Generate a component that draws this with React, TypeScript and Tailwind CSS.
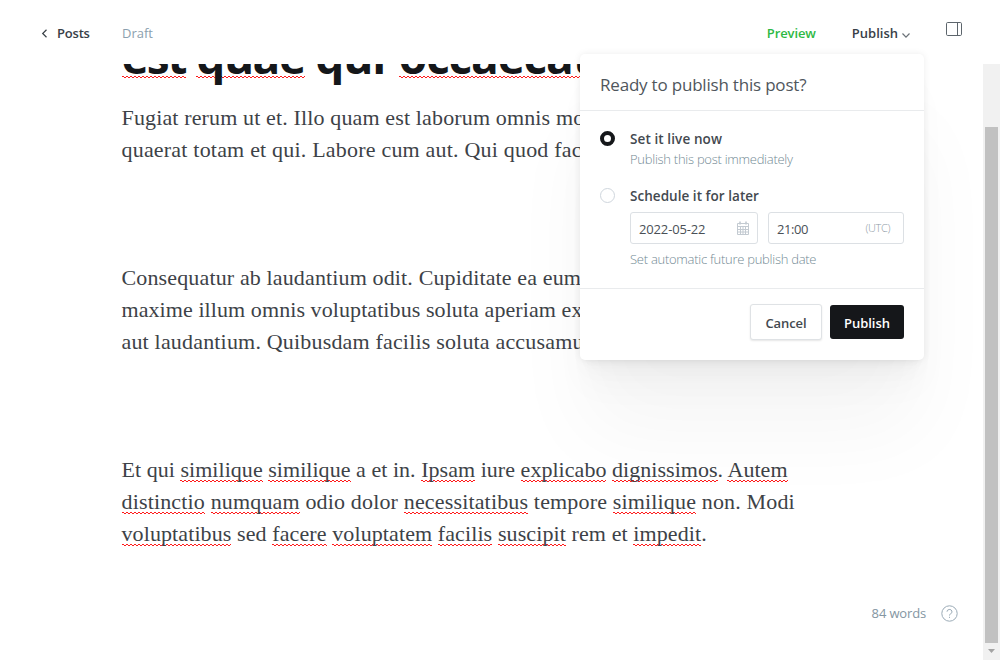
import type { ReactNode } from 'react';

const WAVE =
  'bg-[linear-gradient(90deg,#ff1a1a_60%,transparent_60%),linear-gradient(90deg,#ff1a1a_10%,transparent_10%,transparent_50%,#ff1a1a_50%)] bg-[length:4px_1px] bg-repeat-x';

function Sp({ children }: { children: ReactNode }) {
  return <span className={`${WAVE} bg-[position:0_calc(100%-1px),0_100%]`}>{children}</span>;
}

function TitleSp({ className = '', children }: { className?: string; children: ReactNode }) {
  return <span className={`${WAVE} bg-[position:0_calc(100%-10px),0_calc(100%-9px)] ${className}`}>{children}</span>;
}

function Line({ className, children }: { className: string; children: ReactNode }) {
  return <span className={`block whitespace-nowrap ${className}`}>{children}</span>;
}

function TopBar() {
  return (
    <header className="flex h-16 shrink-0 items-center pl-[41px] pr-[38px] pt-[3px] text-[13px] font-semibold text-[#394047]">
      <svg className="-mt-px mr-[9px]" width="7" height="9" viewBox="0 0 7 9" fill="none" stroke="#394047" strokeWidth="1.2">
        <path d="M5.5 .8 1.7 4.5l3.8 3.7" />
      </svg>
      <span className="w-[65px] tracking-[-0.2px]">Posts</span>
      <span className="font-normal text-[#8b9fae]">Draft</span>
      <span className="ml-auto tracking-[-0.1px] text-[#2eb944]">Preview</span>
      <span className="ml-[36px]">Publish</span>
      <svg className="ml-[4px] mt-[4px]" width="8" height="5" viewBox="0 0 8 5" fill="none" stroke="#6b7278" strokeWidth="1.2">
        <path d="M.5.5 4 4.1 7.5.5" />
      </svg>
      <svg className="-mt-[9px] ml-[36px]" width="16" height="14" viewBox="0 0 16 14" fill="none" stroke="#5d656c">
        <rect x=".5" y=".5" width="15" height="13" rx="1.2" />
        <path d="M11.5.5v13" />
      </svg>
    </header>
  );
}

function Editor() {
  return (
    <div className="min-w-0 flex-1 overflow-hidden pl-[121.5px] text-[#3d4247]">
      <h1 className="-mt-6 mb-[30px] h-8 whitespace-nowrap text-[46px] leading-8 font-bold tracking-[-1.2px] text-[#15171a]">
        <TitleSp className="tracking-[-2px]">est</TitleSp> <TitleSp className="tracking-[-1.5px]">quae</TitleSp>{' '}
        <span className="mr-[3px]">qui</span> <TitleSp>occaecati</TitleSp>
      </h1>
      <div className="flex flex-col gap-24 font-['Liberation_Serif',serif] text-[22px] leading-8">
        <p>
          <Line className="tracking-[0.14px]">Fugiat rerum ut et. Illo quam est laborum omnis molestias</Line>
          <Line className="tracking-[0.2px]">quaerat totam et qui. Labore cum aut. Qui quod facere</Line>
        </p>
        <p>
          <Line className="tracking-[0.14px]">Consequatur ab laudantium odit. Cupiditate ea eum et</Line>
          <Line className="tracking-[0.08px]">maxime illum omnis voluptatibus soluta aperiam explicabo</Line>
          <Line className="tracking-[0.18px]">aut laudantium. Quibusdam facilis soluta accusamus</Line>
        </p>
        <p>
          <Line className="tracking-[0.04px]">
            Et qui <Sp>similique</Sp> <Sp>similique</Sp> a et in. <Sp>Ipsam</Sp> iure <Sp>explicabo</Sp> <Sp>dignissimos</Sp>. <Sp>Autem</Sp>
          </Line>
          <Line className="tracking-[0.16px]">
            <Sp>distinctio</Sp> <Sp>numquam</Sp> odio dolor <Sp>necessitatibus</Sp> tempore <Sp>similique</Sp> non. Modi
          </Line>
          <Line className="tracking-[0.1px]">
            <Sp>voluptatibus</Sp> sed <Sp>facere</Sp> <Sp>voluptatem</Sp> <Sp>facilis</Sp> <Sp>suscipit</Sp> rem et <Sp>impedit</Sp>.
          </Line>
        </p>
      </div>
    </div>
  );
}

function Scrollbar() {
  return (
    <div className="flex w-[17px] shrink-0 flex-col items-center bg-[#f1f1f1] pt-[63px]">
      <div className="h-[516px] w-[13px] bg-[#c1c1c1]" />
      <svg className="mt-[6px]" width="7" height="4" viewBox="0 0 7 4">
        <path d="M0 0h7L3.5 4z" fill="#a3a3a3" />
      </svg>
    </div>
  );
}

function CalendarIcon() {
  return (
    <svg width="12" height="14" viewBox="0 0 12 14" fill="none" stroke="#c3cad1">
      <path d="M.5 2.5h11v11H.5zM.5 5.5h11M.5 8.5h11M.5 11h11M3.5 5v8M6 5v8M8.5 5v8" />
      <path d="M3 .5v3M9 .5v3" strokeWidth="1.6" />
    </svg>
  );
}

function PublishMenu() {
  return (
    <div className="absolute left-[580px] top-[54px] flex h-[306px] w-[344px] flex-col rounded-[5px] bg-white text-[13px] text-[#43494f] shadow-[0_0_7px_rgba(0,0,0,0.08),0_2.1px_2.2px_-5px_rgba(0,0,0,0.011),0_5.1px_5.3px_-5px_rgba(0,0,0,0.016),0_9.5px_10px_-5px_rgba(0,0,0,0.02),0_17px_17.9px_-5px_rgba(0,0,0,0.024),0_31.8px_33.4px_-5px_rgba(0,0,0,0.029),0_76px_80px_-5px_rgba(0,0,0,0.04)]">
      <div className="flex h-[57px] items-center border-b border-[#e9ebed] px-5 pt-[5px] text-[17px] tracking-[-0.2px] text-[#50565c]">
        Ready to publish this post?
      </div>
      <div className="flex h-[178px] flex-col border-b border-[#e9ebed] px-5 pt-[20px]">
        <div className="flex h-[57px] gap-[15px]">
          <div className="size-[15px] rounded-full border-4 border-[#15171a] bg-white" />
          <div className="leading-5">
            <div className="-mt-[2px] text-[13.5px] font-semibold tracking-[0.1px]">Set it live now</div>
            <div className="font-light tracking-[-0.27px] text-[#738a94]">Publish this post immediately</div>
          </div>
        </div>
        <div className="flex gap-[15px]">
          <div className="size-[15px] rounded-full border border-[#cfd6dd] bg-white" />
          <div className="flex-1 leading-5">
            <div className="-mt-[2px] text-[13.5px] font-semibold tracking-[0.04px]">Schedule it for later</div>
            <div className="mt-[6px] mb-[5px] flex gap-[10px] text-[#4a5056]">
              <div className="flex h-8 w-32 items-center justify-between rounded-[3px] border border-[#dce0e4] pl-2 pr-2">
                <span className="mt-px tracking-[-0.15px]">2022-05-22</span>
                <CalendarIcon />
              </div>
              <div className="flex h-8 w-[136px] items-center justify-between rounded-[3px] border border-[#dce0e4] pl-2 pr-[13px]">
                <span className="mt-px tracking-[-0.4px]">21:00</span>
                <span className="text-[11px] font-light tracking-[-0.4px] text-[#8e9aa5]">(UTC)</span>
              </div>
            </div>
            <div className="font-light tracking-[-0.27px] text-[#738a94]">Set automatic future publish date</div>
          </div>
        </div>
      </div>
      <div className="flex items-center justify-end gap-2 px-5 pt-[15px] font-semibold">
        <button className="h-9 w-[72px] rounded-[3px] border border-[#dfe2e5] bg-white pt-[3px] tracking-[-0.1px] shadow-[0_1px_2px_rgba(0,0,0,0.1)]">Cancel</button>
        <button className="h-[34px] w-[74px] rounded-[3px] bg-[#15171a] pt-[3px] text-white">Publish</button>
      </div>
    </div>
  );
}

function WordCount() {
  return (
    <div className="absolute bottom-[37px] right-[42px] flex items-center gap-[15px] text-[13px] text-[#8496a2]">
      <span className="tracking-[-0.15px]">84 words</span>
      <svg width="17" height="17" viewBox="0 0 17 17" fill="none" stroke="#9aaab6">
        <circle cx="8.5" cy="8.5" r="7.7" />
        <path d="M6 6.7a2.5 2.3 0 1 1 3.6 2.1c-.8.4-1.1.8-1.1 1.7M8.5 11.8v1.1" />
      </svg>
    </div>
  );
}

export default function App() {
  return (
    <div className="relative flex h-[660px] w-[1000px] flex-col overflow-hidden bg-white font-['Open_Sans',sans-serif]">
      <TopBar />
      <div className="flex min-h-0 flex-1">
        <Editor />
        <Scrollbar />
      </div>
      <PublishMenu />
      <WordCount />
    </div>
  );
}
